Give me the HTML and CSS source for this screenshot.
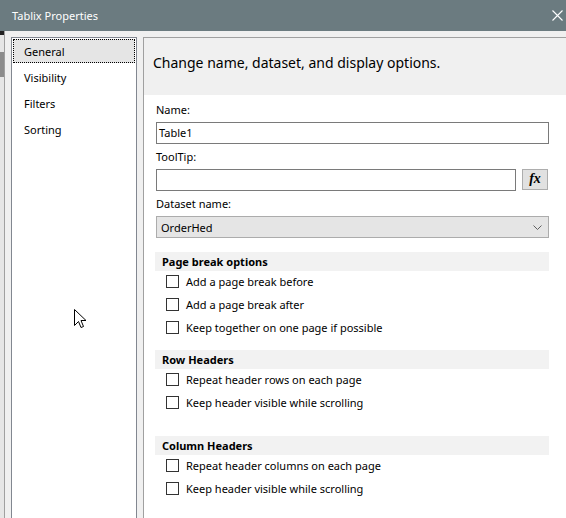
FILE: index.html
```html
<!DOCTYPE html>
<html lang="en">

<head>
    <meta charset="UTF-8">
    <title>Tablix Properties</title>
    <link rel="stylesheet" href="styles.css">
</head>

<body>

    <div class="title-bar">
        <span class="title-text">Tablix Properties</span>
        <svg class="close-icon" width="11" height="11" viewBox="0 0 11 11">
            <path d="M0.5 0.5 L10.5 10.5 M10.5 0.5 L0.5 10.5" stroke="#fff" stroke-width="1.1" fill="none" />
        </svg>
    </div>

    <div class="window">
        <div class="backdrop">
            <div class="backdrop-band"></div>
            <div class="backdrop-block"></div>
        </div>

        <div class="dialog">
            <ul class="nav">
                <li class="nav-item selected">General</li>
                <li class="nav-item">Visibility</li>
                <li class="nav-item">Filters</li>
                <li class="nav-item">Sorting</li>
            </ul>

            <div class="page">
                <div class="page-head">Change name, dataset, and display options.</div>

                <div class="form">
                    <div class="field-label">Name:</div>
                    <div class="text-box">Table1</div>

                    <div class="field-label">ToolTip:</div>
                    <div class="field-row">
                        <div class="text-box"></div>
                        <div class="fx-button"><i>fx</i></div>
                    </div>

                    <div class="field-label">Dataset name:</div>
                    <div class="combo">
                        <span>OrderHed</span>
                        <svg width="9" height="5" viewBox="0 0 9 5">
                            <path d="M0.5 0.5 L4.5 4.5 L8.5 0.5" stroke="#606060" stroke-width="1" fill="none" />
                        </svg>
                    </div>

                    <div class="section first">
                        <div class="section-head">Page break options</div>
                        <div class="check-row"><span class="box"></span>Add a page break before</div>
                        <div class="check-row"><span class="box"></span>Add a page break after</div>
                        <div class="check-row"><span class="box"></span>Keep together on one page if possible</div>
                    </div>

                    <div class="section">
                        <div class="section-head">Row Headers</div>
                        <div class="check-row"><span class="box"></span>Repeat header rows on each page</div>
                        <div class="check-row"><span class="box"></span>Keep header visible while scrolling</div>
                    </div>

                    <div class="section spaced">
                        <div class="section-head">Column Headers</div>
                        <div class="check-row"><span class="box"></span>Repeat header columns on each page</div>
                        <div class="check-row"><span class="box"></span>Keep header visible while scrolling</div>
                    </div>
                </div>
            </div>
        </div>
    </div>

    <svg class="cursor" width="13" height="20" viewBox="0 0 13 20">
        <path d="M0.5 0.5 L0.5 16.5 L4.5 12.5 L7 18.5 L9.5 17.5 L7 11.5 L12 11.5 Z" fill="#fff" stroke="#000"
            stroke-width="1" stroke-linejoin="miter" />
    </svg>

</body>

</html>
```

FILE: styles.css
```css
* {
    box-sizing: border-box;
}

body {
    margin: 0;
    width: 566px;
    height: 518px;
    overflow: hidden;
    position: relative;
    font-family: "Noto Sans", "Open Sans", sans-serif;
    font-size: 11px;
    color: #000;
    background-color: #f0f0f0;
}

.title-bar {
    height: 31px;
    background-color: #6b7b80;
    display: flex;
    align-items: center;
    justify-content: space-between;
    padding: 0 3px 1px 12px;
}

.title-text {
    color: #fff;
    font-size: 11px;
}

.window {
    display: flex;
    height: 500px;
}

.backdrop {
    width: 4px;
    background-color: #e6e6e6;
}

.backdrop-band {
    height: 4px;
    background-color: #222;
}

.backdrop-block {
    height: 25px;
    margin-top: 17px;
    background-color: #8c8c8c;
}

.dialog {
    flex: 1;
    display: flex;
    border-left: 1px solid #a0a0a0;
    padding: 6px 0 0 6px;
    background-color: #f0f0f0;
}

.nav {
    width: 126px;
    margin: 0;
    padding: 1px;
    list-style: none;
    background-color: #fff;
    border: 1px solid #828790;
}

.nav-item {
    height: 24px;
    line-height: 23px;
    margin-bottom: 2px;
    padding-left: 10px;
    border: 1px dotted transparent;
}

.nav-item.selected {
    background-color: #e5e5e5;
    border-color: #000;
}

.page {
    flex: 1;
    margin-left: 6px;
    background-color: #fff;
    border-left: 1px solid #a0a0a0;
    border-top: 1px solid #a0a0a0;
}

.page-head {
    height: 57px;
    padding: 15px 0 0 9px;
    background-color: #f0f0f0;
    font-size: 14px;
    line-height: 20px;
}

.form {
    width: 405px;
    padding: 7px 0 0 12px;
}

.field-label {
    height: 16px;
    line-height: 16px;
    margin-bottom: 4px;
}

.text-box {
    height: 22px;
    line-height: 20px;
    padding-left: 2px;
    border: 1px solid #7a7a7a;
    background-color: #fff;
    margin-bottom: 5px;
}

.field-row {
    display: flex;
    gap: 6px;
    margin-bottom: 5px;
}

.field-row .text-box {
    width: 360px;
    margin-bottom: 0;
}

.fx-button {
    width: 26px;
    height: 21px;
    background-color: #e1e1e1;
    border: 1px solid #adadad;
    text-align: center;
    line-height: 18px;
    font-family: "Liberation Serif", serif;
    font-weight: bold;
    font-size: 14px;
}

.combo {
    height: 22px;
    display: flex;
    align-items: center;
    justify-content: space-between;
    padding: 0 6px 0 4px;
    background-color: #e5e5e5;
    border: 1px solid #acacac;
}

.section {
    margin-top: 11px;
}

.section.first {
    margin-top: 14px;
}

.section.spaced {
    margin-top: 22px;
}

.section-head {
    height: 19px;
    line-height: 19px;
    margin-left: -1px;
    margin-bottom: -1px;
    padding-left: 7px;
    background-color: #f2f2f2;
    font-weight: bold;
}

.check-row {
    height: 23px;
    display: flex;
    align-items: center;
    gap: 7px;
    padding-left: 10px;
}

.box {
    width: 13px;
    height: 13px;
    border: 1px solid #333;
    background-color: #fff;
}

.cursor {
    position: absolute;
    left: 74px;
    top: 309px;
}
```
